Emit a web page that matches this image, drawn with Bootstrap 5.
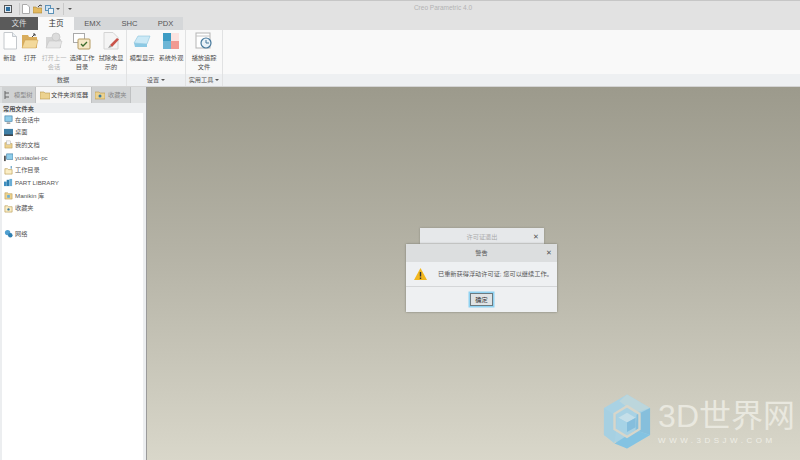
<!DOCTYPE html>
<html lang="zh">
<head>
<meta charset="UTF-8" />
<title>Creo Parametric 4.0</title>
<link href="https://cdn.jsdelivr.net/npm/bootstrap@5.3.2/dist/css/bootstrap.min.css" rel="stylesheet" />
<style>
body { width: 800px; height: 460px; overflow: hidden; font-family: "Liberation Sans", "Noto Sans CJK SC", sans-serif; font-size: 6.2px; line-height: 1.2; color: #444; background: #fff; }
.app-shell { width: 800px; height: 460px; }
.title-area { height: 30px; background: #e2e2e2; border-top: 1px solid #c6c6c6; }
.quick-bar { height: 16px; padding-left: 4px; }
.quick-bar svg { flex: none; }
.win-logo { width: 8px; height: 8px; margin-right: 7px; border: 1px solid #555; background: #dfe9f2; }
.win-logo::after { content: ""; display: block; width: 4px; height: 4px; margin: 1px; background: #2d6f9e; }
.bar-sep { width: 1px; height: 12px; background: #c9c9c9; margin-right: 2px; }
.qa-gap { margin-right: 3px; }
.app-name { width: 800px; top: 3px; left: 0; padding-left: 86px; text-align: center; color: #b3b3b3; font-size: 6.5px; }
.tab-row { height: 13px; }
.ribbon-tab { height: 13px; width: 37px; line-height: 13px; text-align: center; font-size: 7.6px; color: #555; background: #d5d7d9; }
.ribbon-tab.tab-file { width: 38px; background: #5a5a5a; color: #ddd; }
.ribbon-tab.tab-active { width: 36px; background: #f9f9f9; color: #333; }
.ribbon-tab.tab-last { width: 35px; }
.ribbon { height: 57px; background: #f9f9f9; border-bottom: 1px solid #d4d4d4; }
.rb-group { border-right: 1px solid #e1e2e3; }
.rb-tools { height: 44px; padding-top: 2px; }
.rb-btn { flex: none; text-align: center; line-height: 9px; color: #4a4a4a; }
.rb-btn svg { display: block; margin: 0 auto 3px; width: 18px; height: 18px; }
.rb-btn.is-off { color: #b5b5b5; }
.rb-label { height: 12px; line-height: 12px; background: #eef0f2; text-align: center; color: #555; }
.caret-mini { display: inline-block; border: 2px solid transparent; border-top: 2.5px solid #555; border-bottom: 0; margin-left: 2px; vertical-align: middle; }
.work-area { height: 373px; }
.side-panel { width: 146px; background: #dfe1e2; }
.side-tabs { height: 16px; padding-left: 2px; }
.side-tab { height: 16px; line-height: 16px; color: #888; background: #d0d2d3; border-right: 1px solid #bfc1c2; gap: 1px; padding-left: 1px; white-space: nowrap; flex: none; }
.side-tab.tab-on { background: #f6f6f6; color: #444; padding-left: 4px; }
.side-tab.tab-fav { padding-left: 3px; gap: 3px; }
.side-tab svg { width: 10px; height: 10px; flex: none; }
.side-body { background: #eceef0; }
.side-head { height: 10px; line-height: 11px; padding-left: 3px; font-weight: 700; color: #555; background: #eceef0; }
.folder-list { margin-left: 2px; width: 141px; background: #fff; }
.folder-row { height: 12.7px; gap: 2px; padding-left: 2px; color: #555; }
.folder-row svg { width: 9px; height: 9px; flex: none; }
.folder-gap { height: 12.7px; }
.viewport { background: linear-gradient(180deg, #9c9a8c 0%, #b5b3a6 45%, #d9d7ca 100%); border-left: 1px solid #9a9a9a; }
.back-dialog { left: 273px; top: 141px; width: 124px; height: 17px; background: #e6e8ea; color: #aaa; text-align: center; line-height: 17px; box-shadow: 0 0 2px #8b8b80; }
.front-dialog { left: 259px; top: 157px; width: 151px; height: 68px; background: #eef0f2; box-shadow: 0 0 2px #77776c; }
.dlg-head { height: 18px; line-height: 18px; background: #dcdedf; text-align: center; color: #555; }
.dlg-close { top: 0; right: 5px; font-size: 7px; color: #555; }
.dlg-body { height: 25px; padding-left: 8px; gap: 11px; border-bottom: 1px solid #d4d6d8; color: #555; white-space: nowrap; }
.dlg-foot { height: 25px; }
.dlg-ok { width: 23px; height: 13px; padding: 0; font-size: 6.2px; line-height: 10px; color: #333; background: #dfe3e5; border: 1px solid #6c7a80; border-radius: 0; box-shadow: 0 0 0 1.5px #8fd2f2; }
.brand-mark { right: 5px; bottom: 10px; gap: 7px; }
.brand-big { height: 32px; font-size: 32px; line-height: 32px; margin-bottom: 5px; color: #e9e8df; white-space: nowrap; }
.brand-small { height: 7px; font-size: 8px; line-height: 7px; letter-spacing: 3.5px; color: #efeee6; white-space: nowrap; }
</style>
</head>
<body>
<div class="app-shell d-flex flex-column">

    <div class="title-area position-relative">
        <div class="quick-bar d-flex align-items-center">
            <span class="win-logo"></span>
            <span class="bar-sep"></span>
            <svg class="qa-gap" width="8" height="10" viewBox="0 0 8 10"><path d="M.5.500h4.500l2.500 2.500v6.500H.5z" fill="#fff" stroke="#aaa"/></svg>
            <svg class="qa-gap" width="9" height="10" viewBox="0 0 9 10"><path d="M0 3h3l1 1h5v5H0z" fill="#e3b95f" stroke="#a98537" stroke-width=".6"/><path d="M5 3l2-2 2 1" fill="none" stroke="#444"/></svg>
            <svg width="9" height="9" viewBox="0 0 9 9"><rect x=".5" y=".5" width="5" height="5" fill="#cfe3f2" stroke="#5d92b8"/><rect x="3.500" y="3.500" width="5" height="5" fill="#eef5fa" stroke="#5d92b8"/></svg>
            <span class="caret-mini qa-gap"></span>
            <span class="bar-sep"></span>
            <span class="caret-mini"></span>
        </div>
        <div class="app-name position-absolute">Creo Parametric 4.0</div>
        <div class="tab-row d-flex">
            <div class="ribbon-tab tab-file">文件</div>
            <div class="ribbon-tab tab-active">主页</div>
            <div class="ribbon-tab">EMX</div>
            <div class="ribbon-tab">SHC</div>
            <div class="ribbon-tab tab-last">PDX</div>
        </div>
    </div>

    <div class="ribbon d-flex">
        <div class="rb-group d-flex flex-column" style="width:127px">
            <div class="rb-tools d-flex">
                <div class="rb-btn" style="width:19px">
                    <svg viewBox="0 0 18 18"><path d="M3 .5h8.500l4 4V17H3z" fill="#fff" stroke="#c4c8cc"/><path d="M11.500 .5v4h4" fill="#e8edf2" stroke="#c4c8cc"/></svg>新建</div>
                <div class="rb-btn" style="width:22px">
                    <svg viewBox="0 0 18 18"><path d="M1 3h6l1 2h8v11H1z" fill="#d9ad5d"/><path d="M1 16l3-8h13l-2 8z" fill="#f3d99b" stroke="#c99d4e" stroke-width=".5"/><path d="M11 5l3-3m0 0h-2m2 0v2" stroke="#444" fill="none"/></svg>打开</div>
                <div class="rb-btn is-off" style="width:26px">
                    <svg viewBox="0 0 18 18"><path d="M1 5h6l1 2h8v9H1z" fill="#d5d5d5"/><path d="M1 16l3-7h13l-2 7z" fill="#e6e6e6" stroke="#c0c0c0" stroke-width=".5"/><circle cx="11" cy="5" r="4" fill="#dcdcdc" stroke="#c4c4c4" stroke-width=".7"/></svg>打开上一<br>会话</div>
                <div class="rb-btn" style="width:30px">
                    <svg viewBox="0 0 18 18"><rect x=".5" y="1.500" width="11" height="9" fill="#fff" stroke="#aaa"/><rect x="5" y="7" width="12" height="10" rx="1" fill="#f5e8c8" stroke="#b59b62"/><path d="M8 12l2 2 4-4" fill="none" stroke="#3a6b2d" stroke-width="1.300"/></svg>选择工作<br>目录</div>
                <div class="rb-btn" style="width:28px">
                    <svg viewBox="0 0 18 18"><path d="M2 .5h9l5 5V17H2z" fill="#f4f4f4" stroke="#d4d4d4"/><path d="M8 13l7-7 2 1.500L10 15z" fill="#c9534a"/><path d="M6 16l2-3 2 2z" fill="#999"/></svg>拭除未显<br>示的</div>
            </div>
            <div class="rb-label">数据</div>
        </div>
        <div class="rb-group d-flex flex-column" style="width:59px">
            <div class="rb-tools d-flex">
                <div class="rb-btn" style="width:30px">
                    <svg viewBox="0 0 18 18"><path d="M1 11L5 4h12l-3 8z" fill="#cbe9f6" stroke="#8cc3dc" stroke-width=".6"/><path d="M1 11l13 1v3H2z" fill="#8cc9e4"/></svg>模型显示</div>
                <div class="rb-btn" style="width:28px">
                    <svg viewBox="0 0 18 18"><rect x="1" y="1" width="8" height="8" fill="#3d9cc4"/><rect x="9" y="1" width="8" height="8" fill="#fbe3e0"/><rect x="1" y="9" width="8" height="8" fill="#6db6d6"/><rect x="9" y="9" width="8" height="8" fill="#f19a92"/></svg>系统外观</div>
            </div>
            <div class="rb-label">设置<span class="caret-mini"></span></div>
        </div>
        <div class="rb-group d-flex flex-column" style="width:37px">
            <div class="rb-tools d-flex">
                <div class="rb-btn" style="width:36px">
                    <svg viewBox="0 0 18 18"><rect x="1" y="1" width="14" height="15" fill="#fff" stroke="#b5b5b5"/><path d="M1 4h14" stroke="#c4c4c4"/><circle cx="11" cy="11" r="5" fill="#e9f2f8" stroke="#47799c" stroke-width="1.200"/><path d="M11 8v3h3" fill="none" stroke="#47799c"/></svg>播放追踪<br>文件</div>
            </div>
            <div class="rb-label">实用工具<span class="caret-mini"></span></div>
        </div>
        <div class="flex-grow-1 d-flex flex-column">
            <div class="rb-tools"></div>
            <div class="rb-label"></div>
        </div>
    </div>

    <div class="work-area d-flex">
        <div class="side-panel d-flex flex-column">
            <div class="side-tabs d-flex">
                <div class="side-tab d-flex align-items-center" style="width:34px">
                    <svg viewBox="0 0 10 10"><path d="M2 1v8M2 3h4M2 7h4" stroke="#666" fill="none"/></svg>模型树</div>
                <div class="side-tab tab-on d-flex align-items-center" style="width:56px">
                    <svg viewBox="0 0 10 10"><path d="M0 2h4l1 1h5v6H0z" fill="#ecd28f" stroke="#b8994f" stroke-width=".6"/></svg>文件夹浏览器</div>
                <div class="side-tab tab-fav d-flex align-items-center" style="width:39px">
                    <svg viewBox="0 0 10 10"><path d="M0 2h4l1 1h5v6H0z" fill="#ecd28f" stroke="#b8994f" stroke-width=".6"/><circle cx="5" cy="6" r="1.500" fill="#3a7aa0"/></svg>收藏夹</div>
            </div>
            <div class="side-body flex-grow-1">
                <div class="side-head">常用文件夹</div>
                <div class="folder-list h-100">
                    <div class="folder-row d-flex align-items-center"><svg viewBox="0 0 10 10"><rect x="1" y="1" width="8" height="6" fill="#8fcdea" stroke="#3b7aa0" stroke-width=".7"/><path d="M3 9h4" stroke="#555"/></svg>在会话中</div>
                    <div class="folder-row d-flex align-items-center"><svg viewBox="0 0 10 10"><rect x="0" y="1" width="10" height="7" fill="#3f7fa6"/><path d="M0 8h10" stroke="#333" stroke-width="1.500"/></svg>桌面</div>
                    <div class="folder-row d-flex align-items-center"><svg viewBox="0 0 10 10"><path d="M1 3h3l1 1h4v5H1z" fill="#ecd28f" stroke="#b8994f" stroke-width=".6"/><rect x="3" y="1" width="4" height="4" fill="#f6f6f6" stroke="#aaa" stroke-width=".5"/></svg>我的文档</div>
                    <div class="folder-row d-flex align-items-center"><svg viewBox="0 0 10 10"><rect x="3" y="1" width="7" height="6" fill="#8fcdea" stroke="#3b7aa0" stroke-width=".7"/><rect x="0" y="3" width="2" height="6" fill="#555"/></svg>yuxiaolei-pc</div>
                    <div class="folder-row d-flex align-items-center"><svg viewBox="0 0 10 10"><path d="M1 3h3l1 1h4v5H1z" fill="#fbeec6" stroke="#b8994f" stroke-width=".7"/><path d="M8 0v3" stroke="#2f7fb0"/></svg>工作目录</div>
                    <div class="folder-row d-flex align-items-center"><svg viewBox="0 0 10 10"><rect x="0" y="4" width="3" height="5" fill="#3f8fc0"/><rect x="3" y="2" width="3" height="7" fill="#2f7fb0"/><rect x="6" y="1" width="3" height="8" fill="#6aaed6"/></svg>PART LIBRARY</div>
                    <div class="folder-row d-flex align-items-center"><svg viewBox="0 0 10 10"><path d="M1 2h3l1 1h4v6H1z" fill="#ecd28f" stroke="#b8994f" stroke-width=".6"/><rect x="3.500" y="4.500" width="3" height="3" fill="#6aaed6"/></svg>Manikin 库</div>
                    <div class="folder-row d-flex align-items-center"><svg viewBox="0 0 10 10"><path d="M1 2h3l1 1h4v6H1z" fill="#fbeec6" stroke="#b8994f" stroke-width=".7"/><circle cx="5" cy="6" r="1.300" fill="#3a7aa0"/></svg>收藏夹</div>
                    <div class="folder-gap"></div>
                    <div class="folder-row d-flex align-items-center"><svg viewBox="0 0 10 10"><circle cx="4" cy="4" r="3" fill="#4f9fd0"/><circle cx="7" cy="7" r="2.500" fill="#2f7fb0"/></svg>网络</div>
                </div>
            </div>
        </div>

        <div class="viewport flex-grow-1 position-relative">
            <div class="back-dialog position-absolute">许可证退出<span class="dlg-close position-absolute">✕</span></div>
            <div class="front-dialog position-absolute">
                <div class="dlg-head position-relative">警告<span class="dlg-close position-absolute">✕</span></div>
                <div class="dlg-body d-flex align-items-center">
                    <svg width="13" height="12" viewBox="0 0 13 12"><path d="M6.500 0L13 12H0z" fill="#f2b71f"/><path d="M6.500 4v4.500M6.500 9.500v1.500" stroke="#333" stroke-width="1.400"/></svg>
                    <span>已重新获得浮动许可证; 您可以继续工作。</span>
                </div>
                <div class="dlg-foot d-flex align-items-center justify-content-center">
                    <button class="btn dlg-ok" type="button">确定</button>
                </div>
            </div>

            <div class="brand-mark position-absolute d-flex align-items-center">
                <svg width="48" height="57" viewBox="0 0 50 58">
                    <path d="M25 1L49 15v28L25 57 1 43V15z" fill="#a9d2e4"/>
                    <path d="M25 1L49 15 33 20 17 8z" fill="#bcd6dc"/>
                    <path d="M49 15v28L34 38l1-16z" fill="#86bfdc"/>
                    <path d="M49 43L25 57l-13-5 22-14z" fill="#84c3e2"/>
                    <path d="M1 15v28l11 9 3-28z" fill="#a6d0e2"/>
                    <path d="M25 13L38 21v16L25 45 12 37V21z" fill="none" stroke="#d8d6ca" stroke-width="2.500"/>
                    <path d="M25 20l9 5-9 5-9-5z" fill="#c5dfe9"/>
                    <path d="M16 25l9 5v10l-9-5z" fill="#a6d3e6"/>
                    <path d="M34 25l-9 5v10l9-5z" fill="#85bedd"/>
                </svg>
                <div>
                    <div class="brand-big">3D世界网</div>
                    <div class="brand-small">WWW.3DSJW.COM</div>
                </div>
            </div>
        </div>
    </div>
</div>
<script src="https://cdn.jsdelivr.net/npm/bootstrap@5.3.2/dist/js/bootstrap.bundle.min.js"></script>
</body>
</html>
